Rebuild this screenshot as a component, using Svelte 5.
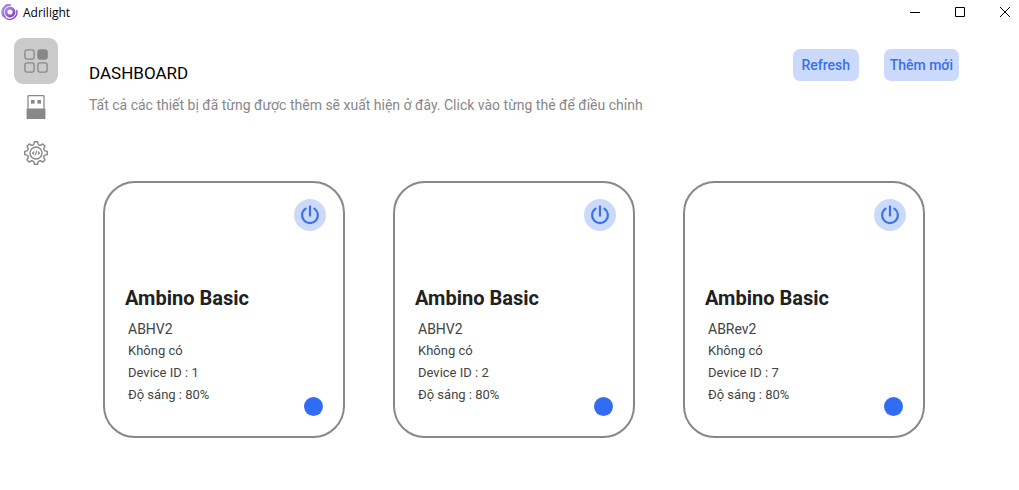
<script>
  const devices = [
    { id: 1, name: 'Ambino Basic', model: 'ABHV2', port: 'Không có', brightness: 80 },
    { id: 2, name: 'Ambino Basic', model: 'ABHV2', port: 'Không có', brightness: 80 },
    { id: 7, name: 'Ambino Basic', model: 'ABRev2', port: 'Không có', brightness: 80 }
  ];

  // Outline of the eight-toothed gear, sampled around the centre of a 24-unit box
  const teeth = Array.from({ length: 8 }, (_, i) => {
    const at = (deg, r) => {
      const a = ((i * 45 + deg) * Math.PI) / 180;
      return `${(12 + r * Math.sin(a)).toFixed(2)} ${(12 - r * Math.cos(a)).toFixed(2)}`;
    };
    return `${i ? 'L' : 'M'}${at(-13, 9.2)}L${at(-8, 11.4)}L${at(8, 11.4)}L${at(13, 9.2)}Q${at(22.5, 8)} ${at(32, 9.2)}`;
  }).join('');
  const gear = `${teeth}Z`;
</script>

<div class="window">
  <header class="titlebar">
    <svg class="logo" viewBox="0 0 18 18" aria-hidden="true">
      <defs>
        <linearGradient id="violet" x1="0" y1="0" x2="1" y2="1">
          <stop offset="0" stop-color="#b18be8" />
          <stop offset="1" stop-color="#7d3cc4" />
        </linearGradient>
      </defs>
      <g fill="none" stroke="url(#violet)" stroke-linecap="round">
        <circle cx="10" cy="9" r="4" stroke-width="2.8" />
        <path d="M16.8 7.5A7.3 7.3 0 0 1 5.5 15" stroke-width="1.5" />
        <path d="M10 1.8A7.3 7.3 0 0 0 5 14" stroke-width="1.7" />
        <path d="M7 1.4A8 8 0 0 0 3 13.5" stroke-width="1" />
      </g>
    </svg>
    <span class="app-name">Adrilight</span>
    <div class="controls">
      <button aria-label="Minimize">
        <svg viewBox="0 0 10 10"><path d="M0 5.5h10" /></svg>
      </button>
      <button aria-label="Maximize">
        <svg viewBox="0 0 10 10"><path d="M.5.5h9v9h-9z" /></svg>
      </button>
      <button aria-label="Close">
        <svg viewBox="0 0 10 10"><path d="M0 0l10 10M10 0L0 10" /></svg>
      </button>
    </div>
  </header>

  <div class="body">
    <nav class="sidebar">
      <button class="active" aria-label="Dashboard">
        <svg viewBox="0 0 24 24" fill="none" stroke="#888" stroke-width="1.3">
          <rect x=".9" y=".9" width="9.2" height="9.2" rx="2" />
          <rect x="13.9" y=".9" width="9.2" height="9.2" rx="2" fill="#888" />
          <rect x=".9" y="13.9" width="9.2" height="9.2" rx="2" />
          <rect x="13.9" y="13.9" width="9.2" height="9.2" rx="2" />
        </svg>
      </button>
      <button aria-label="Devices">
        <svg viewBox="0 0 24 24" fill="#888">
          <path d="M4 13.5V1.5a1 1 0 0 1 1-1h14a1 1 0 0 1 1 1v12" fill="none" stroke="#888" stroke-width="1.3" />
          <rect x="7" y="5" width="3.6" height="3.6" />
          <rect x="13.4" y="5" width="3.6" height="3.6" />
          <rect x="2.6" y="13.5" width="18.8" height="10.5" />
        </svg>
      </button>
      <button aria-label="Settings">
        <svg viewBox="0 0 24 24" fill="none" stroke="#888" stroke-width="1.4" stroke-linejoin="round">
          <path d={gear} />
          <circle cx="12" cy="12" r="6" />
          <path d="M10 10.5L8.6 12l1.4 1.5M14 10.5l1.4 1.5-1.4 1.5M12.7 10l-1.4 4" stroke-width="1.1" />
        </svg>
      </button>
    </nav>

    <main>
      <div class="heading">
        <div class="intro">
          <h1>DASHBOARD</h1>
          <p>Tất cả các thiết bị đã từng được thêm sẽ xuất hiện ở đây. Click vào từng thẻ để điều chỉnh</p>
        </div>
        <div class="actions">
          <button>Refresh</button>
          <button>Thêm mới</button>
        </div>
      </div>

      <section class="cards">
        {#each devices as device (device.id)}
          <article class="card">
            <button class="power" aria-label="Power">
              <svg viewBox="0 0 20 20" fill="none" stroke="#3a70e8" stroke-width="2.2">
                <path d="M10 0.5v11" />
                <path d="M5.6 3.6a7.9 7.9 0 1 0 8.8 0" stroke-linecap="round" />
              </svg>
            </button>
            <h2>{device.name}</h2>
            <div class="details">
              <span class="model">{device.model}</span>
              <span>{device.port}</span>
              <span>Device ID : {device.id}</span>
              <span>Độ sáng : {device.brightness}%</span>
            </div>
            <i class="status"></i>
          </article>
        {/each}
      </section>
    </main>
  </div>
</div>

<style>
  :global(body) {
    margin: 0;
    background: #fff;
  }
  .window {
    font-family: Roboto, sans-serif;
    color: #000;
  }
  button {
    border: 0;
    padding: 0;
    background: none;
    font: inherit;
    color: inherit;
    cursor: pointer;
  }
  svg {
    display: block;
  }
  h1, h2, p {
    margin: 0;
  }
  .titlebar {
    display: flex;
    align-items: center;
    height: 24px;
  }
  .logo {
    width: 18px;
    height: 18px;
    margin-right: 5px;
  }
  .app-name {
    padding-top: 2px;
    font: 12px/16px "Open Sans", sans-serif;
  }
  .controls {
    display: flex;
    gap: 17px;
    margin-left: auto;
  }
  .controls button {
    display: grid;
    place-items: center;
    width: 28px;
    height: 24px;
  }
  .controls svg {
    width: 10px;
    height: 10px;
    fill: none;
    stroke: #000;
  }
  .body {
    display: flex;
  }
  .sidebar {
    display: flex;
    flex-direction: column;
    padding: 14px;
  }
  .sidebar button {
    display: grid;
    place-items: center;
    width: 44px;
    height: 46px;
    border-radius: 9px;
  }
  .sidebar .active {
    background: #cbcbcb;
  }
  .sidebar svg {
    width: 24px;
    height: 24px;
  }
  main {
    flex: 1;
    padding: 25px 60px 48px 17px;
  }
  .heading {
    display: flex;
    align-items: flex-start;
    justify-content: space-between;
  }
  .intro {
    display: flex;
    flex-direction: column;
    gap: 12px;
    padding-top: 14px;
  }
  h1 {
    font-size: 17px;
    line-height: 20px;
    font-weight: 400;
  }
  p {
    color: #888;
    font-size: 14px;
    line-height: 20px;
  }
  .actions {
    display: flex;
    gap: 25px;
  }
  .actions button {
    height: 32px;
    padding: 0 6px;
    min-width: 66px;
    border-radius: 7px;
    background: #cbdafa;
    color: #3a70e8;
    font-size: 14px;
    font-weight: 500;
    white-space: nowrap;
  }
  .cards {
    display: flex;
    flex-wrap: wrap;
    gap: 48px;
    padding: 66px 0 0 14px;
  }
  .card {
    position: relative;
    display: flex;
    flex-direction: column;
    box-sizing: border-box;
    width: 242px;
    padding: 16px 17px 30px 20px;
    border: 2px solid #888;
    border-radius: 32px;
  }
  .power {
    display: grid;
    place-items: center;
    align-self: flex-end;
    width: 32px;
    height: 32px;
    border-radius: 50%;
    background: #cbdafa;
  }
  .power svg {
    width: 20px;
    height: 20px;
  }
  h2 {
    margin-top: 55px;
    color: #212121;
    font-size: 20px;
    line-height: 24px;
    font-weight: 700;
  }
  .details {
    display: flex;
    flex-direction: column;
    padding: 8px 3px 0;
    color: #444;
    font-size: 13px;
    line-height: 22px;
  }
  .model {
    font-size: 14px;
  }
  .status {
    position: absolute;
    right: 20px;
    bottom: 20px;
    width: 19px;
    height: 19px;
    border-radius: 50%;
    background: #316cf4;
  }
</style>
